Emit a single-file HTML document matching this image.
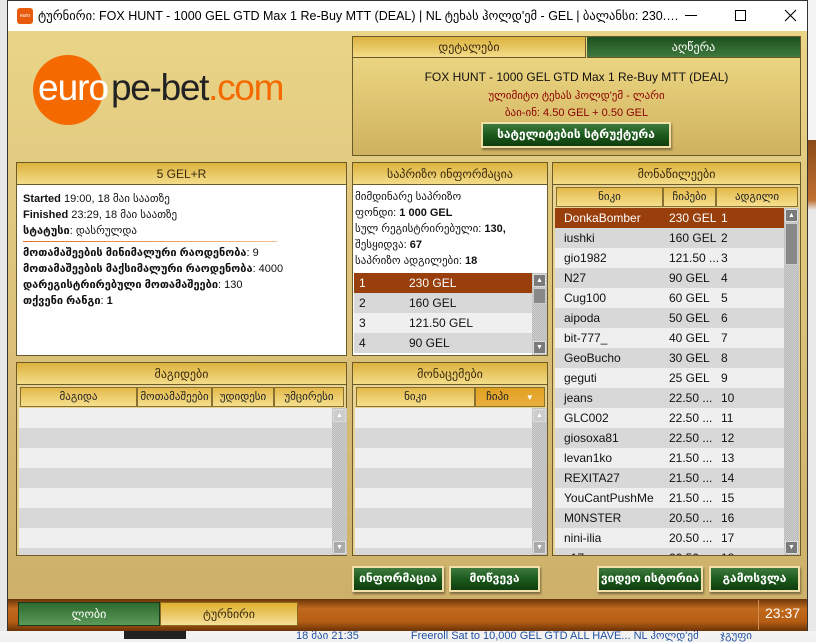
<!DOCTYPE html>
<html><head><meta charset="utf-8"><style>
*{box-sizing:border-box;margin:0;padding:0}
body{width:816px;height:639px;overflow:hidden;background:#f0f0f0;font-family:"Liberation Sans","DejaVu Sans",sans-serif;position:relative}
.abs{position:absolute}
#win{left:7px;top:0;width:801px;height:631px;border:1px solid #333;background:#fff}
#title{left:8px;top:1px;width:799px;height:30px;background:#fff;font-size:13px;color:#000}
#main{left:8px;top:31px;width:799px;height:568px;background:linear-gradient(180deg,#e9d487 0%,#dcc27a 50%,#cdb06a 100%)}
.panel{position:absolute;border:1px solid #6b5a2a;background:#fff}
.hdr{height:22px;background:linear-gradient(#dcb23c,#f3dc8a);border-bottom:1px solid #6b5a2a;text-align:center;font-size:12px;line-height:22px;color:#3a2a10}
.colh{position:absolute;height:20px;background:linear-gradient(#e3b84a,#f5e08f);border:1px solid #8a7030;font-size:11px;line-height:18px;text-align:center;color:#222}
.btn{position:absolute;height:26px;background:linear-gradient(#3f7a3f,#1c5a1c 50%,#0e3d0e);border:2px solid #f2e0a8;box-shadow:1px 2px 2px rgba(0,0,0,.4);color:#fff;font-weight:bold;font-size:12px;line-height:21px;text-align:center}
.row{position:absolute;left:0;height:20px;font-size:12px;line-height:20px;color:#111}
.sb{position:absolute;width:15px;background:repeating-conic-gradient(#b8b8b8 0 25%,#d0d0d0 0 50%) 0 0/2px 2px}
.arr{position:absolute;width:13px;height:13px;background:#7a7a7a;border:1px solid #ddd;color:#fff;font-size:7px;text-align:center;line-height:11px}
</style></head><body>
<div class="abs" style="left:0;top:0;width:7px;height:639px;background:#e8e8e8"></div>
<div class="abs" style="left:808px;top:0;width:8px;height:639px;background:linear-gradient(#f4f4f4 0,#f4f4f4 140px,#8a4a18 140px,#c07030 200px,#e8e8e8 210px)"></div>
<div class="abs" style="left:0;top:631px;width:816px;height:8px;background:#f3f3f3"></div>
<div class="abs" style="left:124px;top:631px;width:62px;height:8px;background:#222"></div>
<div class="abs" style="left:296px;top:629px;font-size:11px;color:#1f4f9f;white-space:nowrap">18 მაი 21:35 &nbsp; &nbsp; &nbsp; &nbsp; &nbsp; &nbsp; &nbsp; &nbsp; Freeroll Sat to 10,000 GEL GTD ALL HAVE... NL ჰოლდ'ემ &nbsp; &nbsp; &nbsp; ჯგუფი</div>
<div id="win" class="abs"></div>
<div id="title" class="abs">
 <div class="abs" style="left:9px;top:7px;width:16px;height:16px;background:#e85a0c;border-radius:3px;color:#fff;font-size:5px;line-height:16px;text-align:center">euro</div>
 <div class="abs" style="left:30px;top:7px;width:645px;white-space:nowrap;overflow:hidden;text-overflow:ellipsis;font-size:12.5px">ტურნირი: FOX HUNT - 1000 GEL GTD Max 1 Re-Buy MTT (DEAL) | NL ტეხას ჰოლდ'ემ - GEL | ბალანსი: 230.60 GEL...</div>
 <div class="abs" style="left:677px;top:14px;width:12px;height:1px;background:#000"></div>
 <div class="abs" style="left:727px;top:9px;width:11px;height:11px;border:1px solid #000"></div>
 <svg class="abs" style="left:776px;top:8px" width="13" height="13"><path d="M1 1L12 12M12 1L1 12" stroke="#000" stroke-width="1.1"/></svg>
</div>
<div id="main" class="abs">
 <div class="abs" style="left:25px;top:24px;width:70px;height:70px;border-radius:50%;background:#f56a00"></div>
 <div class="abs" style="left:30px;top:36px;font-size:37px;color:#fff;letter-spacing:-1px">euro</div>
 <div class="abs" style="left:103px;top:36px;font-size:37px;color:#222;letter-spacing:-1.3px">pe-bet<span style="color:#f56a00">.com</span></div>
 <div class="panel" style="left:344px;top:5px;width:449px;height:120px;background:linear-gradient(#f1dc88,#cfb260)">
  <div class="abs" style="left:0;top:0;width:233px;height:21px;background:linear-gradient(#dcb23c,#f3dc8a);border-right:1px solid #6b5a2a;border-bottom:1px solid #6b5a2a;font-size:12px;text-align:center;line-height:21px;color:#3a2a10">დეტალები</div>
  <div class="abs" style="left:234px;top:0;width:213px;height:21px;background:linear-gradient(#1e4f1e,#3f7a3f);border-bottom:1px solid #6b5a2a;font-size:12px;text-align:center;line-height:21px;color:#fff">აღწერა</div>
  <div class="abs" style="left:0;top:33px;width:447px;text-align:center;font-size:12px;color:#111">FOX HUNT - 1000 GEL GTD Max 1 Re-Buy MTT (DEAL)</div>
  <div class="abs" style="left:0;top:52px;width:447px;text-align:center;font-size:11px;color:#8b0000">ულიმიტო ტეხას ჰოლდ'ემ - ლარი</div>
  <div class="abs" style="left:0;top:69px;width:447px;text-align:center;font-size:11px;color:#8b0000">ბაი-ინ: 4.50 GEL + 0.50 GEL</div>
  <div class="btn" style="left:128px;top:85px;width:190px">სატელიტების სტრუქტურა</div>
 </div>
 <div class="panel" style="left:8px;top:131px;width:331px;height:194px">
  <div class="hdr">5 GEL+R</div>
  <div style="padding:6px 6px;font-size:11px;line-height:16px;color:#111">
   <div><b>Started</b> 19:00, 18 მაი საათზე</div>
   <div><b>Finished</b> 23:29, 18 მაი საათზე</div>
   <div><b>სტატუსი</b>: დასრულდა</div>
   <div style="height:1px;width:254px;background:linear-gradient(90deg,#e07020,#f5c090);margin:2px 0 3px"></div>
   <div><b>მოთამაშეების მინიმალური რაოდენობა</b>: 9</div>
   <div><b>მოთამაშეების მაქსიმალური რაოდენობა</b>: 4000</div>
   <div><b>დარეგისტრირებული მოთამაშეები</b>: 130</div>
   <div><b>თქვენი რანგი</b>: <b>1</b></div>
  </div>
 </div>
 <div class="panel" style="left:344px;top:131px;width:196px;height:194px">
  <div class="hdr">საპრიზო ინფორმაცია</div>
  <div style="padding:4px 2px;font-size:11px;line-height:16px;color:#111">
   <div>მიმდინარე საპრიზო</div><div>ფონდი: <b>1 000 GEL</b></div><div>სულ რეგისტრირებული: <b>130,</b></div><div>შესყიდვა: <b>67</b></div><div>საპრიზო ადგილები: <b>18</b></div>
  </div>
  <div class="abs" style="left:1px;top:110px;width:178px;height:82px;overflow:hidden">
   <div class="row" style="top:0;width:178px;background:#983f0c;color:#fff"><span style="position:absolute;left:5px">1</span><span style="position:absolute;left:55px">230 GEL</span></div>
   <div class="row" style="top:20px;width:178px;background:#d8d8d8"><span style="position:absolute;left:5px">2</span><span style="position:absolute;left:55px">160 GEL</span></div>
   <div class="row" style="top:40px;width:178px;background:#efefef"><span style="position:absolute;left:5px">3</span><span style="position:absolute;left:55px">121.50 GEL</span></div>
   <div class="row" style="top:60px;width:178px;background:#d8d8d8"><span style="position:absolute;left:5px">4</span><span style="position:absolute;left:55px">90 GEL</span></div>
  </div>
  <div class="sb" style="left:179px;top:110px;height:82px"><div class="arr" style="left:1px;top:1px">▲</div><div class="abs" style="left:1px;top:15px;width:13px;height:16px;background:#888;border:1px solid #ccc"></div><div class="arr" style="left:1px;top:68px">▼</div></div>
 </div>
 <div class="panel" style="left:544px;top:131px;width:249px;height:394px;background:#e8d490">
  <div class="hdr">მონაწილეები</div>
  <div class="colh" style="left:3px;top:24px;width:107px">ნიკი</div>
  <div class="colh" style="left:110px;top:24px;width:53px">ჩიპები</div>
  <div class="colh" style="left:163px;top:24px;width:82px">ადგილი</div>
  <div class="abs" style="left:2px;top:45px;width:229px;height:347px;overflow:hidden;background:#efefef" id="plist"></div>
  <div class="sb" style="left:231px;top:45px;height:347px;background-color:#ccc"><div class="arr" style="left:1px;top:1px">▲</div><div class="abs" style="left:1px;top:15px;width:13px;height:42px;background:#888;border:1px solid #ccc"></div><div class="arr" style="left:1px;top:333px">▼</div></div>
 </div>
 <div class="panel" style="left:8px;top:331px;width:331px;height:194px;background:#e8d490">
  <div class="hdr">მაგიდები</div>
  <div class="colh" style="left:3px;top:24px;width:117px">მაგიდა</div>
  <div class="colh" style="left:120px;top:24px;width:75px">მოთამაშეები</div>
  <div class="colh" style="left:195px;top:24px;width:62px">უდიდესი</div>
  <div class="colh" style="left:257px;top:24px;width:70px">უმცირესი</div>
  <div class="abs" style="left:2px;top:45px;width:313px;height:147px;background:repeating-linear-gradient(#efefef 0 20px,#d8d8d8 20px 40px)"></div>
  <div class="sb" style="left:315px;top:45px;height:147px"><div class="arr" style="left:1px;top:1px;background:#ccc">▲</div><div class="arr" style="left:1px;top:133px;background:#aaa">▼</div></div>
 </div>
 <div class="panel" style="left:344px;top:331px;width:196px;height:194px;background:#e8d490">
  <div class="hdr">მონაცემები</div>
  <div class="colh" style="left:3px;top:24px;width:119px">ნიკი</div>
  <div class="colh" style="left:122px;top:24px;width:70px;background:linear-gradient(#e0a020,#eab040)">ჩიპი <span style="font-size:8px;color:#fff;margin-left:14px">▼</span></div>
  <div class="abs" style="left:2px;top:45px;width:177px;height:147px;background:repeating-linear-gradient(#efefef 0 20px,#d8d8d8 20px 40px)"></div>
  <div class="sb" style="left:179px;top:45px;height:147px"><div class="arr" style="left:1px;top:1px;background:#ccc">▲</div><div class="arr" style="left:1px;top:133px;background:#aaa">▼</div></div>
 </div>
 <div class="btn" style="left:344px;top:535px;width:92px">ინფორმაცია</div>
 <div class="btn" style="left:441px;top:535px;width:91px">მოწვევა</div>
 <div class="btn" style="left:589px;top:535px;width:106px">ვიდეო ისტორია</div>
 <div class="btn" style="left:701px;top:535px;width:91px">გამოსვლა</div>
</div>
<div class="abs" style="left:8px;top:599px;width:799px;height:32px;background:linear-gradient(#6a3408,#c06a1c 30%,#b65e14 70%,#6a3408)"></div>
<div class="abs" style="left:18px;top:602px;width:142px;height:24px;background:linear-gradient(#2e6b2e,#5a9a5a);border:1px solid #1a3a1a;color:#fff;font-size:12px;text-align:center;line-height:22px">ლობი</div>
<div class="abs" style="left:160px;top:602px;width:138px;height:24px;background:linear-gradient(#e0b030,#f5e09a);border:1px solid #8a6a20;color:#3a2a10;font-size:12px;text-align:center;line-height:22px">ტურნირი</div>
<div class="abs" style="left:758px;top:600px;width:1px;height:30px;background:#d09050"></div>
<div class="abs" style="left:765px;top:605px;color:#fff;font-size:14px">23:37</div>
<script>
var d=[["DonkaBomber","230 GEL","1"],["iushki","160 GEL","2"],["gio1982","121.50 ...","3"],["N27","90 GEL","4"],["Cug100","60 GEL","5"],["aipoda","50 GEL","6"],["bit-777_","40 GEL","7"],["GeoBucho","30 GEL","8"],["geguti","25 GEL","9"],["jeans","22.50 ...","10"],["GLC002","22.50 ...","11"],["giosoxa81","22.50 ...","12"],["levan1ko","21.50 ...","13"],["REXITA27","21.50 ...","14"],["YouCantPushMe","21.50 ...","15"],["M0NSTER","20.50 ...","16"],["nini-ilia","20.50 ...","17"],["a17","20.50 ...","18"]];
var h="";d.forEach(function(r,i){var bg=i==0?"#983f0c":(i%2?"#d8d8d8":"#efefef");var c=i==0?"#fff":"#111";h+='<div class="row" style="top:'+(i*20)+'px;width:229px;background:'+bg+';color:'+c+'"><span style="position:absolute;left:9px">'+r[0]+'</span><span style="position:absolute;left:114px">'+r[1]+'</span><span style="position:absolute;left:166px">'+r[2]+'</span></div>'});document.getElementById("plist").innerHTML=h;
</script>
</body></html>
